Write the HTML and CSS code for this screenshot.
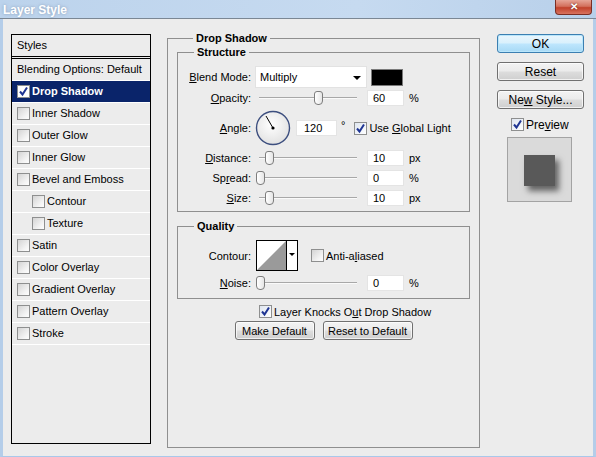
FILE: index.html
```html
<!DOCTYPE html>
<html>
<head>
    <meta charset="UTF-8">
    <title>Layer Style</title>
    <link rel="stylesheet" href="styles.css">
</head>
<body>
    <div class="window">
        <!-- Title bar -->
        <div class="titlebar">
            <span class="title">Layer Style</span>
            <span class="close">&#x2715;</span>
        </div>

        <div class="content">
            <!-- Left: list of styles -->
            <div class="styles-panel">
                <div class="styles-head">Styles</div>
                <ul class="styles-list">
                    <li>Blending Options: Default</li>
                    <li class="selected">
                        <span class="cb checked white"><svg width="13" height="13"><path d="M3 6.5 L5.5 9.5 L10 2.5" fill="none" stroke="#1f3593" stroke-width="2"/></svg></span>Drop Shadow
                    </li>
                    <li><span class="cb"></span>Inner Shadow</li>
                    <li><span class="cb"></span>Outer Glow</li>
                    <li><span class="cb"></span>Inner Glow</li>
                    <li><span class="cb"></span>Bevel and Emboss</li>
                    <li class="sub"><span class="cb"></span>Contour</li>
                    <li class="sub"><span class="cb"></span>Texture</li>
                    <li><span class="cb"></span>Satin</li>
                    <li><span class="cb"></span>Color Overlay</li>
                    <li><span class="cb"></span>Gradient Overlay</li>
                    <li><span class="cb"></span>Pattern Overlay</li>
                    <li><span class="cb"></span>Stroke</li>
                </ul>
            </div>

            <!-- Middle: Drop Shadow settings -->
            <fieldset class="group main-group">
                <legend>Drop Shadow</legend>

                <fieldset class="group structure">
                    <legend>Structure</legend>

                    <div class="row row-blend">
                        <span class="row-label"><u>B</u>lend Mode:</span>
                        <div class="select">Multiply<span class="arrow"></span></div>
                        <span class="swatch"></span>
                    </div>

                    <div class="row row-opacity">
                        <span class="row-label"><u>O</u>pacity:</span>
                        <div class="slider"><span class="track"></span><span class="thumb" style="left: 59px"></span></div>
                        <span class="field">60</span>
                        <span class="unit">%</span>
                    </div>

                    <div class="row row-angle">
                        <span class="row-label"><u>A</u>ngle:</span>
                        <svg class="dial" width="36" height="36">
                            <defs>
                                <radialGradient id="dialfill" cx="45%" cy="40%" r="60%">
                                    <stop offset="0" stop-color="#ffffff"/>
                                    <stop offset="1" stop-color="#e2e2e2"/>
                                </radialGradient>
                            </defs>
                            <circle cx="18" cy="18" r="16.5" fill="url(#dialfill)" stroke="#3d4f7f" stroke-width="1.4"/>
                            <line x1="18" y1="18" x2="11" y2="6" stroke="#000" stroke-width="1"/>
                            <circle cx="18" cy="18" r="1.6" fill="#000"/>
                        </svg>
                        <span class="field wide">120</span>
                        <span class="degree">&deg;</span>
                        <span class="cb checked"><svg width="13" height="13"><path d="M3 6.5 L5.5 9.5 L10 2.5" fill="none" stroke="#1f3593" stroke-width="2"/></svg></span>
                        <span class="cb-text">Use <u>G</u>lobal Light</span>
                    </div>

                    <div class="row row-slider">
                        <span class="row-label"><u>D</u>istance:</span>
                        <div class="slider"><span class="track"></span><span class="thumb" style="left: 10px"></span></div>
                        <span class="field">10</span>
                        <span class="unit">px</span>
                    </div>

                    <div class="row row-slider">
                        <span class="row-label">Sp<u>r</u>ead:</span>
                        <div class="slider"><span class="track"></span><span class="thumb" style="left: 1px"></span></div>
                        <span class="field">0</span>
                        <span class="unit">%</span>
                    </div>

                    <div class="row row-slider">
                        <span class="row-label"><u>S</u>ize:</span>
                        <div class="slider"><span class="track"></span><span class="thumb" style="left: 10px"></span></div>
                        <span class="field">10</span>
                        <span class="unit">px</span>
                    </div>
                </fieldset>

                <fieldset class="group quality">
                    <legend>Quality</legend>

                    <div class="row row-contour">
                        <span class="row-label">Contour:</span>
                        <svg class="contour" width="42" height="31">
                            <rect x="0.5" y="0.5" width="41" height="30" fill="#fff" stroke="#000"/>
                            <polygon points="1,30 30,1 30,30" fill="#9a9a9a"/>
                            <line x1="30.5" y1="0" x2="30.5" y2="31" stroke="#000"/>
                            <polygon points="33,13 39,13 36,16" fill="#000"/>
                        </svg>
                        <span class="cb aa"></span>
                        <span class="cb-text">Anti-a<u>l</u>iased</span>
                    </div>

                    <div class="row row-noise">
                        <span class="row-label"><u>N</u>oise:</span>
                        <div class="slider"><span class="track"></span><span class="thumb" style="left: 1px"></span></div>
                        <span class="field">0</span>
                        <span class="unit">%</span>
                    </div>
                </fieldset>

                <div class="knock">
                    <span class="cb checked"><svg width="13" height="13"><path d="M3 6.5 L5.5 9.5 L10 2.5" fill="none" stroke="#1f3593" stroke-width="2"/></svg></span>
                    <span class="cb-text">Layer Knocks O<u>u</u>t Drop Shadow</span>
                </div>

                <div class="defaults">
                    <button class="win-button make-default">Make Default</button>
                    <button class="win-button reset-default">Reset to Default</button>
                </div>
            </fieldset>

            <!-- Right: dialog buttons and preview -->
            <div class="side">
                <button class="win-button side-button ok">OK</button>
                <button class="win-button side-button">Reset</button>
                <button class="win-button side-button">Ne<u>w</u> Style...</button>
                <div class="preview-check">
                    <span class="cb checked"><svg width="13" height="13"><path d="M3 6.5 L5.5 9.5 L10 2.5" fill="none" stroke="#1f3593" stroke-width="2"/></svg></span>
                    <span class="cb-text">Pre<u>v</u>iew</span>
                </div>
                <div class="preview">
                    <div class="preview-square"></div>
                </div>
            </div>
        </div>
    </div>
</body>
</html>
```

FILE: styles.css
```css
/* General */
body {
    margin: 0;
    font-family: 'Liberation Sans', Arial, sans-serif;
    font-size: 11px;
    color: #000;
    background: #ececec;
}

.window {
    width: 596px;
    height: 457px;
    box-sizing: border-box;
    border-left: 3px solid #b4cde9;
    border-right: 3px solid #b4cde9;
    border-bottom: 1px solid #a9c8ea;
    background: #ececec;
    display: flex;
    flex-direction: column;
}

/* Title bar */
.titlebar {
    height: 19px;
    margin: 0 -3px;
    box-sizing: border-box;
    border-bottom: 1px solid #7b8794;
    background: linear-gradient(to right, #bcd3ec, #c6daf0 60%, #b8d0ea);
    display: flex;
    align-items: flex-start;
    justify-content: space-between;
}

.title {
    margin: 3px 0 0 3px;
    font-size: 12px;
    font-weight: bold;
    color: #fff;
    text-shadow: 0 0 3px rgba(90, 110, 140, 0.55);
}

.close {
    width: 37px;
    height: 15px;
    margin-right: 4px;
    box-sizing: border-box;
    border: 1px solid #7a2e24;
    border-top: none;
    border-radius: 0 0 4px 4px;
    background: linear-gradient(#e6a597, #d3705d 45%, #c1412b 55%, #d8735f);
    color: #fff;
    font-size: 10px;
    font-weight: bold;
    text-align: center;
    line-height: 14px;
    text-shadow: 0 0 2px #5a1a12;
}

.content {
    flex: 1;
    display: flex;
    align-items: flex-start;
    padding: 11px 0 0 8px;
}

/* Checkboxes */
.cb {
    width: 13px;
    height: 13px;
    box-sizing: border-box;
    border: 1px solid #8e8f8f;
    background: linear-gradient(135deg, #d4d4d4, #f4f4f4 70%, #fdfdfd);
    display: inline-block;
    flex: none;
    position: relative;
}

.cb.checked {
    background: linear-gradient(135deg, #dfe6f0, #ffffff);
}

.cb.white {
    background: #fff;
}

.cb svg {
    position: absolute;
    left: -1px;
    top: -1px;
}

.cb-text {
    margin-left: 2px;
}

/* Styles list */
.styles-panel {
    width: 140px;
    height: 410px;
    margin-top: 4px;
    box-sizing: border-box;
    border: 1px solid #000;
}

.styles-head {
    height: 22px;
    line-height: 21px;
    padding-left: 5px;
    box-sizing: border-box;
    border-bottom: 1px solid #000;
}

.styles-list {
    list-style: none;
    margin: 1px 0 0;
    padding: 0;
    border-top: 1px solid #000;
}

.styles-list li {
    height: 22px;
    line-height: 21px;
    box-sizing: border-box;
    border-bottom: 1px solid #fff;
    padding-left: 5px;
    display: flex;
    align-items: center;
    white-space: nowrap;
}

.styles-list li .cb {
    margin-right: 2px;
}

.styles-list li.sub {
    padding-left: 20px;
}

.styles-list li.selected {
    background: #0a246a;
    color: #fff;
    font-weight: bold;
}

/* Group boxes */
.group {
    margin: 0;
    border: 1px solid #8f8f8f;
    min-width: 0;
}

.group legend {
    font-weight: bold;
    line-height: 14px;
    padding: 0 3px;
    margin-left: 16px;
}

.main-group {
    width: 313px;
    height: 417px;
    margin-top: 1px;
    box-sizing: border-box;
    margin-left: 16px;
    padding: 0 9px;
}

.structure {
    padding: 7px 0 5px;
}

.quality {
    margin-top: 7px;
    padding: 7px 0 7px;
}

.row {
    display: flex;
    align-items: center;
    white-space: nowrap;
}

.row-label {
    width: 73px;
    margin-right: 4px;
    text-align: right;
    flex: none;
}

.row-blend {
    height: 22px;
}

.row-opacity {
    height: 16px;
    margin-top: 2px;
}

.row-angle {
    height: 36px;
    margin-top: 4px;
}

.row-slider {
    height: 16px;
    margin-top: 4px;
}

.select {
    width: 112px;
    height: 22px;
    box-sizing: border-box;
    border: 1px solid #e2e2e2;
    background: #fff;
    padding-left: 4px;
    line-height: 20px;
    position: relative;
}

.select .arrow {
    position: absolute;
    right: 5px;
    top: 9px;
    border-left: 4px solid transparent;
    border-right: 4px solid transparent;
    border-top: 4px solid #000;
}

.swatch {
    width: 32px;
    height: 17px;
    margin-left: 4px;
    box-sizing: border-box;
    border: 1px solid #7a7a7a;
    background: #000;
}

.slider {
    width: 112px;
    height: 16px;
    position: relative;
    flex: none;
}

.track {
    position: absolute;
    left: 4px;
    top: 7px;
    width: 98px;
    border-top: 1px solid #a8a8a8;
    border-bottom: 1px solid #fafafa;
}

.thumb {
    position: absolute;
    top: 1px;
    width: 9px;
    height: 14px;
    box-sizing: border-box;
    border: 1px solid #7d7d7d;
    border-radius: 3px 3px 4px 4px;
    background: linear-gradient(to right, #ffffff, #e6e6e6);
}

.field {
    width: 37px;
    height: 16px;
    box-sizing: border-box;
    border: 1px solid #e4e4e4;
    background: #fff;
    padding-left: 5px;
    line-height: 15px;
    flex: none;
}

.field.wide {
    width: 41px;
    margin-left: 5px;
    padding-left: 7px;
}

.unit {
    margin-left: 5px;
}

.degree {
    margin: -6px 9px 0 4px;
}

.row-contour {
    height: 31px;
}

.contour {
    margin-left: 1px;
    flex: none;
}

.cb.aa {
    margin-left: 13px;
}

.row-noise {
    height: 16px;
    margin-top: 4px;
}

.knock {
    display: flex;
    align-items: center;
    height: 13px;
    margin-top: 6px;
    padding-left: 82px;
    white-space: nowrap;
}

.defaults {
    display: flex;
    justify-content: center;
    gap: 8px;
    margin-top: 3px;
}

/* Buttons */
.win-button {
    height: 19px;
    padding: 0;
    font-family: 'Liberation Sans', Arial, sans-serif;
    font-size: 11px;
    color: #000;
    border: 1px solid #707070;
    border-radius: 3px;
    background: linear-gradient(#f3f3f3, #ebebeb 48%, #dddddd 52%, #cfcfcf);
    box-shadow: inset 0 0 0 1px rgba(255, 255, 255, 0.7);
}

.make-default {
    width: 80px;
}

.reset-default {
    width: 90px;
}

.side {
    display: flex;
    flex-direction: column;
    margin: 4px 0 0 17px;
}

.side-button {
    width: 87px;
    margin-bottom: 9px;
    font-size: 12px;
}

.side-button.ok {
    border-color: #3c7fb1;
    background: linear-gradient(#eaf6fd, #d9f0fc 48%, #bee6fd 52%, #a7d9f5);
    box-shadow: inset 0 0 0 1px #b9e6fb;
}

.preview-check {
    display: flex;
    align-items: center;
    height: 13px;
    padding-left: 14px;
    font-size: 12px;
}

.preview {
    width: 65px;
    height: 65px;
    margin: 6px 0 0 10px;
    box-sizing: border-box;
    border: 1px solid #a3a3a3;
    background: #dadada;
    padding: 17px 0 0 16px;
}

.preview-square {
    width: 31px;
    height: 31px;
    background: #595959;
    box-shadow: 4px 5px 6px rgba(0, 0, 0, 0.55);
}
```
